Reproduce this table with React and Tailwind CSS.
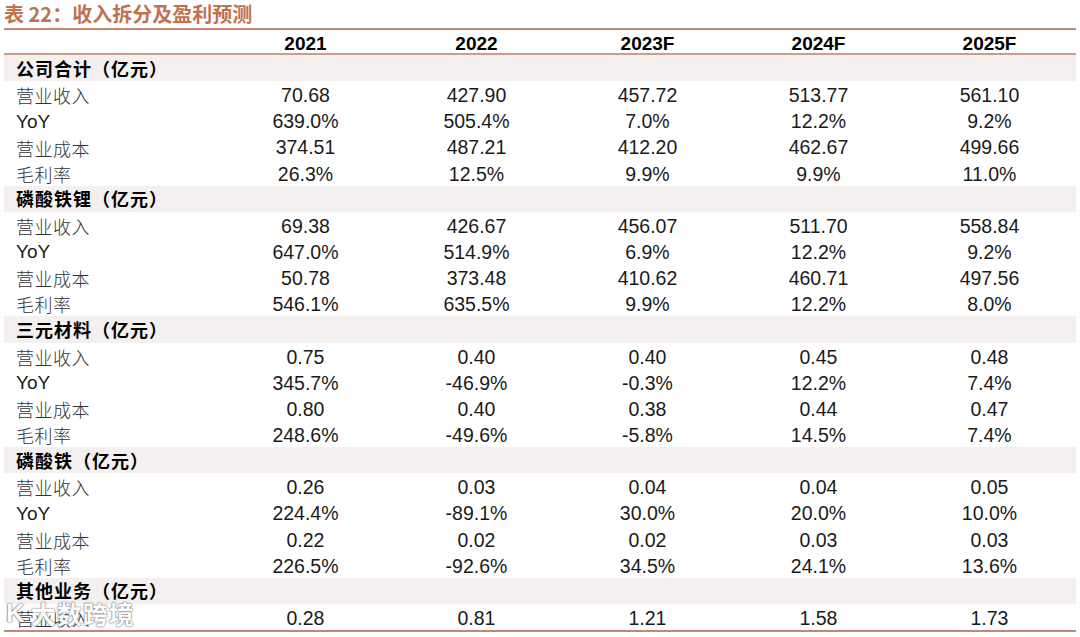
const sections = [
  {
    name: '公司合计（亿元）',
    rows: [
      ['营业收入', '70.68', '427.90', '457.72', '513.77', '561.10'],
      ['YoY', '639.0%', '505.4%', '7.0%', '12.2%', '9.2%'],
      ['营业成本', '374.51', '487.21', '412.20', '462.67', '499.66'],
      ['毛利率', '26.3%', '12.5%', '9.9%', '9.9%', '11.0%'],
    ],
  },
  {
    name: '磷酸铁锂（亿元）',
    rows: [
      ['营业收入', '69.38', '426.67', '456.07', '511.70', '558.84'],
      ['YoY', '647.0%', '514.9%', '6.9%', '12.2%', '9.2%'],
      ['营业成本', '50.78', '373.48', '410.62', '460.71', '497.56'],
      ['毛利率', '546.1%', '635.5%', '9.9%', '12.2%', '8.0%'],
    ],
  },
  {
    name: '三元材料（亿元）',
    rows: [
      ['营业收入', '0.75', '0.40', '0.40', '0.45', '0.48'],
      ['YoY', '345.7%', '-46.9%', '-0.3%', '12.2%', '7.4%'],
      ['营业成本', '0.80', '0.40', '0.38', '0.44', '0.47'],
      ['毛利率', '248.6%', '-49.6%', '-5.8%', '14.5%', '7.4%'],
    ],
  },
  {
    name: '磷酸铁（亿元）',
    rows: [
      ['营业收入', '0.26', '0.03', '0.04', '0.04', '0.05'],
      ['YoY', '224.4%', '-89.1%', '30.0%', '20.0%', '10.0%'],
      ['营业成本', '0.22', '0.02', '0.02', '0.03', '0.03'],
      ['毛利率', '226.5%', '-92.6%', '34.5%', '24.1%', '13.6%'],
    ],
  },
  {
    name: '其他业务（亿元）',
    rows: [['营业收入', '0.28', '0.81', '1.21', '1.58', '1.73']],
  },
];

const years = ['2021', '2022', '2023F', '2024F', '2025F'];
const grid = 'grid grid-cols-[216px_repeat(5,171px)]';
const cjk = "font-['Noto_Sans_CJK_SC',sans-serif]";
const num = "font-['Liberation_Sans','Noto_Sans_CJK_SC',sans-serif]";

function DataRow({ row }) {
  const [label, ...vals] = row;
  const isLatin = label === 'YoY';
  return (
    <div className={`${grid} h-[26.15px] items-center`}>
      <div
        className={`pl-[12px] ${
          isLatin ? `${num} text-[19px] text-[#1a1a1a]` : `${cjk} text-[18px] text-[#333] font-light tracking-[0.5px]`
        }`}
      >
        {label}
      </div>
      {vals.map((v, i) => (
        <div key={i} className={`${num} text-center text-[19.5px] text-[#1a1a1a]`}>
          {v}
        </div>
      ))}
    </div>
  );
}

export default function App() {
  return (
    <div className="relative w-[1080px] h-[637px] bg-white px-[4px] overflow-hidden">
      <div
        className={`h-[28px] flex items-center text-[20px] font-bold text-[#c0714f] ${cjk} leading-none`}
      >
        表 22：收入拆分及盈利预测
      </div>
      <div className="h-[2px] bg-[#c8866e]" />
      <div className={`${grid} h-[23px] items-center`}>
        <div />
        {years.map((y) => (
          <div key={y} className={`${num} text-center text-[19px] font-bold text-black`}>
            {y}
          </div>
        ))}
      </div>
      <div className="h-[2px] bg-[#d09a86]" />
      {sections.map((s) => (
        <div key={s.name}>
          <div className="h-[26.15px] bg-[#f4f0ef] flex items-center">
            <div className={`pl-[12px] ${cjk} text-[18px] font-bold text-black tracking-[1px]`}>
              {s.name}
            </div>
          </div>
          {s.rows.map((r, i) => (
            <DataRow key={i} row={r} />
          ))}
        </div>
      ))}
      <div className="h-[2px] bg-[#c8866e]" />

      <div className="absolute left-[6px] top-[600px] flex items-center gap-[6px] text-white [text-shadow:0_0_2px_#666,0_0_1px_#444]">
        <span className={`${num} text-[26px] font-bold leading-none`}>K</span>
        <span className={`${cjk} text-[25px] font-bold leading-none tracking-[1px] opacity-90`}>
          大数跨境
        </span>
      </div>
    </div>
  );
}
